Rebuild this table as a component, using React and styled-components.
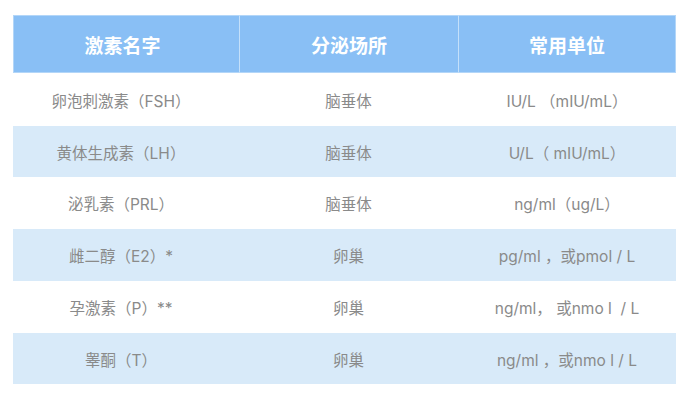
import React from "react";
import styled, { createGlobalStyle } from "styled-components";

const Global = createGlobalStyle`
  html, body { margin: 0; padding: 0; background: #ffffff; }
  body { font-family: Inter, "Noto Sans CJK SC", sans-serif; }
`;

const Page = styled.div`
  width: 691px;
  height: 402px;
  padding: 15px 15px 0 13px;
  box-sizing: border-box;
`;

const Table = styled.div`
  width: 663px;
  display: grid;
  grid-template-columns: 226px 219px 218px;
`;

const HeadCell = styled.div`
  height: 58px;
  background: #89bff5;
  color: #ffffff;
  font-family: "Noto Sans CJK SC", sans-serif;
  font-size: 19px;
  font-weight: 700;
  display: flex;
  align-items: center;
  justify-content: center;
  box-sizing: border-box;
  border-top: 1px solid #b3d6f8;
  border-bottom: 1px solid #b3d6f8;
  border-left: 1px solid ${(p) => (p.$first ? "#b3d6f8" : "#c4e0fa")};
  border-right: ${(p) => (p.$last ? "1px solid #b3d6f8" : "none")};
  padding-right: ${(p) => (p.$first ? "8px" : "0")};
`;

const Cell = styled.div`
  height: ${(p) => p.$h}px;
  background: ${(p) => (p.$alt ? "#d8eaf9" : "#ffffff")};
  color: #8a8a8a;
  font-size: 15.5px;
  display: flex;
  align-items: center;
  justify-content: center;
  white-space: pre;
  padding-right: ${(p) => (p.$first ? "10px" : "0")};
  box-sizing: border-box;
`;

const heads = ["激素名字", "分泌场所", "常用单位"];
const rows = [
  ["卵泡刺激素（FSH）", "脑垂体", "IU/L （mIU/mL）"],
  ["黄体生成素（LH）", "脑垂体", "U/L（ mIU/mL）"],
  ["泌乳素（PRL）", "脑垂体", "ng/ml（ug/L）"],
  ["雌二醇（E2）*", "卵巢", "pg/ml ，或pmol / L"],
  ["孕激素（P）**", "卵巢", "ng/ml， 或nmo l  / L"],
  ["睾酮（T）", "卵巢", "ng/ml ，或nmo l / L"],
];
const heights = [53, 51, 52, 52, 52, 51];

export default function App() {
  return (
    <>
      <Global />
      <Page>
        <Table>
          {heads.map((h, i) => (
            <HeadCell key={h} $first={i === 0} $last={i === 2}>
              {h}
            </HeadCell>
          ))}
          {rows.map((r, ri) =>
            r.map((c, ci) => (
              <Cell key={ri + "-" + ci} $alt={ri % 2 === 1} $h={heights[ri]} $first={ci === 0}>
                {c}
              </Cell>
            ))
          )}
        </Table>
      </Page>
    </>
  );
}
